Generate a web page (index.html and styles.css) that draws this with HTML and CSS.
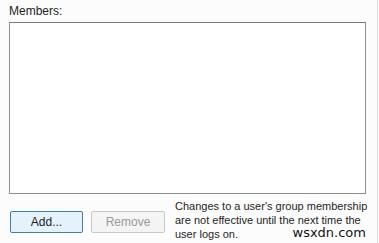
FILE: index.html
```html
<!DOCTYPE html>
<html lang="en">
<head>
    <meta charset="UTF-8">
    <title>Members</title>
    <link rel="stylesheet" href="styles.css">
</head>
<body>
    <div class="panel">
        <div class="label">Members:</div>
        <div class="list"></div>
        <div class="bottom">
            <button class="btn default">Add...</button>
            <button class="btn" disabled>Remove</button>
            <p class="note">Changes to a user's group membership<br>are not effective until the next time the<br>user logs on.</p>
        </div>
        <span class="mark">wsxdn.com</span>
    </div>
</body>
</html>
```

FILE: styles.css
```css
* {
    margin: 0;
    padding: 0;
    box-sizing: border-box;
}
body {
    background: #fff;
    font-family: "Liberation Sans", Arial, sans-serif;
    font-size: 12px;
    color: #1e1e1e;
}
.panel {
    position: relative;
    width: 378px;
    height: 243px;
    border-right: 1px solid #dcdcdc;
    padding: 4px 0 0 9px;
    background: #fcfcfc;
}
.label {
    height: 15px;
    line-height: 15px;
}
.list {
    width: 357px;
    height: 172px;
    margin-top: 3px;
    border: 1px solid #8e8f8f;
    border-top-color: #7a7a7a;
    background: #fff;
}
.bottom {
    display: flex;
    align-items: flex-start;
    margin-top: 5px;
}
.btn {
    width: 73px;
    height: 22px;
    margin-top: 12px;
    margin-left: 1px;
    font-family: inherit;
    font-size: 12px;
    color: #1e1e1e;
    background: #ececec;
    border: 1px solid #adadad;
    border-radius: 2px;
}
.btn.default {
    background: #e5f1fb;
    border-color: #3c7fb1;
}
.btn + .btn {
    margin-left: 8px;
    width: 74px;
}
.btn:disabled {
    background: #f4f4f4;
    border-color: #c8c8c8;
    color: #9a9a9a;
}
.note {
    margin-left: 10px;
    line-height: 14px;
    font-size: 11px;
    white-space: nowrap;
}
.mark {
    position: absolute;
    right: 11px;
    bottom: 3px;
    font-family: "DejaVu Sans", sans-serif;
    font-size: 13px;
    color: #111;
    background: #fff;
}
```
